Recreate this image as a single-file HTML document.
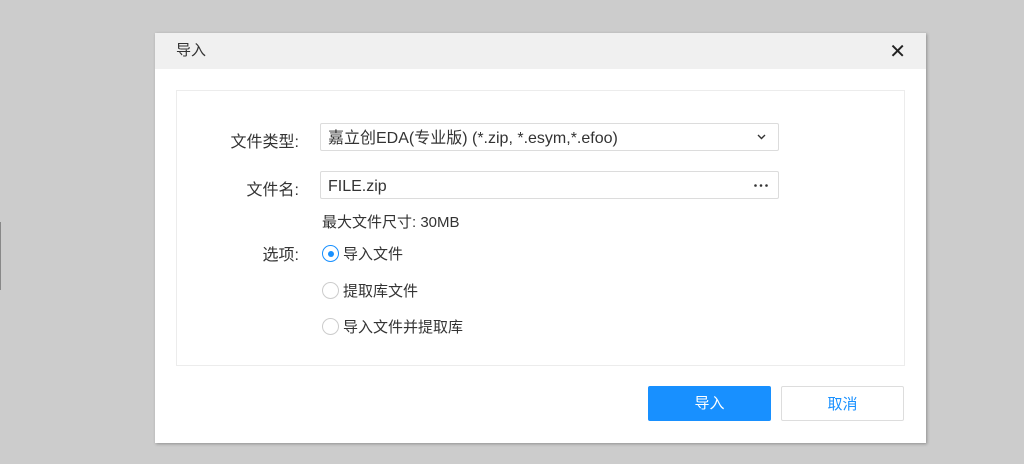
<!DOCTYPE html>
<html><head><meta charset="utf-8"><style>
body{margin:0;width:1024px;height:464px;background:#cccccc;font-family:"Liberation Sans","Noto Sans CJK SC",sans-serif;position:relative;overflow:hidden;color:#333}
.dlg{position:absolute;left:155px;top:33px;width:771px;height:410px;background:#fff;box-shadow:1px 1px 3px rgba(0,0,0,.3)}
.hd{height:36px;background:#f0f0f0;font-size:15px;line-height:36px;padding-left:21px;color:#333}
.x{position:absolute;right:20px;top:6px;font-size:20px;color:#222}
.box{position:absolute;left:21px;top:57px;width:727px;height:274px;border:1px solid #ececec}
.a{position:absolute;font-size:15px}
.lbl{text-align:right;width:150px;font-size:16px}
.in{position:absolute;left:143px;height:26px;border:1px solid #dcdcdc;border-radius:2px;font-size:16px;line-height:29px;padding-left:7px;width:450px;overflow:hidden}
.r{position:absolute;left:145px;width:17px;height:17px;border:1px solid #ccc;border-radius:50%;box-sizing:border-box}
.btn{position:absolute;top:353px;width:123px;height:35px;border-radius:2px;font-size:15px;line-height:35px;text-align:center;box-sizing:border-box}
</style></head><body>
<div style="position:absolute;left:0;top:222px;width:1px;height:68px;background:#888"></div>
<div class="dlg">
<div class="hd">导入</div>
<div class="x">✕</div>
<div class="box">
<div class="a lbl" style="left:-28px;top:37px">文件类型:</div>
<div class="in" style="top:32px">嘉立创EDA(专业版) (*.zip, *.esym,*.efoo)<svg style="position:absolute;right:12px;top:10px" width="9" height="6" viewBox="0 0 9 6"><path d="M1 1L4.5 4.5L8 1" fill="none" stroke="#333" stroke-width="1.4"/></svg></div>
<div class="a lbl" style="left:-28px;top:85px">文件名:</div>
<div class="in" style="top:80px">FILE.zip<svg style="position:absolute;right:10px;top:12px" width="14" height="3" viewBox="0 0 14 3"><circle cx="1.5" cy="1.5" r="1.3" fill="#333"/><circle cx="7" cy="1.5" r="1.3" fill="#333"/><circle cx="12.5" cy="1.5" r="1.3" fill="#333"/></svg></div>
<div class="a" style="left:145px;top:120px">最大文件尺寸: 30MB</div>
<div class="a lbl" style="left:-28px;top:150px">选项:</div>
<div class="r" style="top:154px;border-color:#1890ff"><div style="position:absolute;left:4.5px;top:4.5px;width:6px;height:6px;border-radius:50%;background:#1890ff"></div></div>
<div class="a" style="left:166px;top:152px">导入文件</div>
<div class="r" style="top:191px"></div>
<div class="a" style="left:166px;top:189px">提取库文件</div>
<div class="r" style="top:227px"></div>
<div class="a" style="left:166px;top:225px">导入文件并提取库</div>
</div>
<div class="btn" style="left:493px;background:#1890ff;color:#fff">导入</div>
<div class="btn" style="left:626px;border:1px solid #ddd;color:#1890ff">取消</div>
</div>
</body></html>
